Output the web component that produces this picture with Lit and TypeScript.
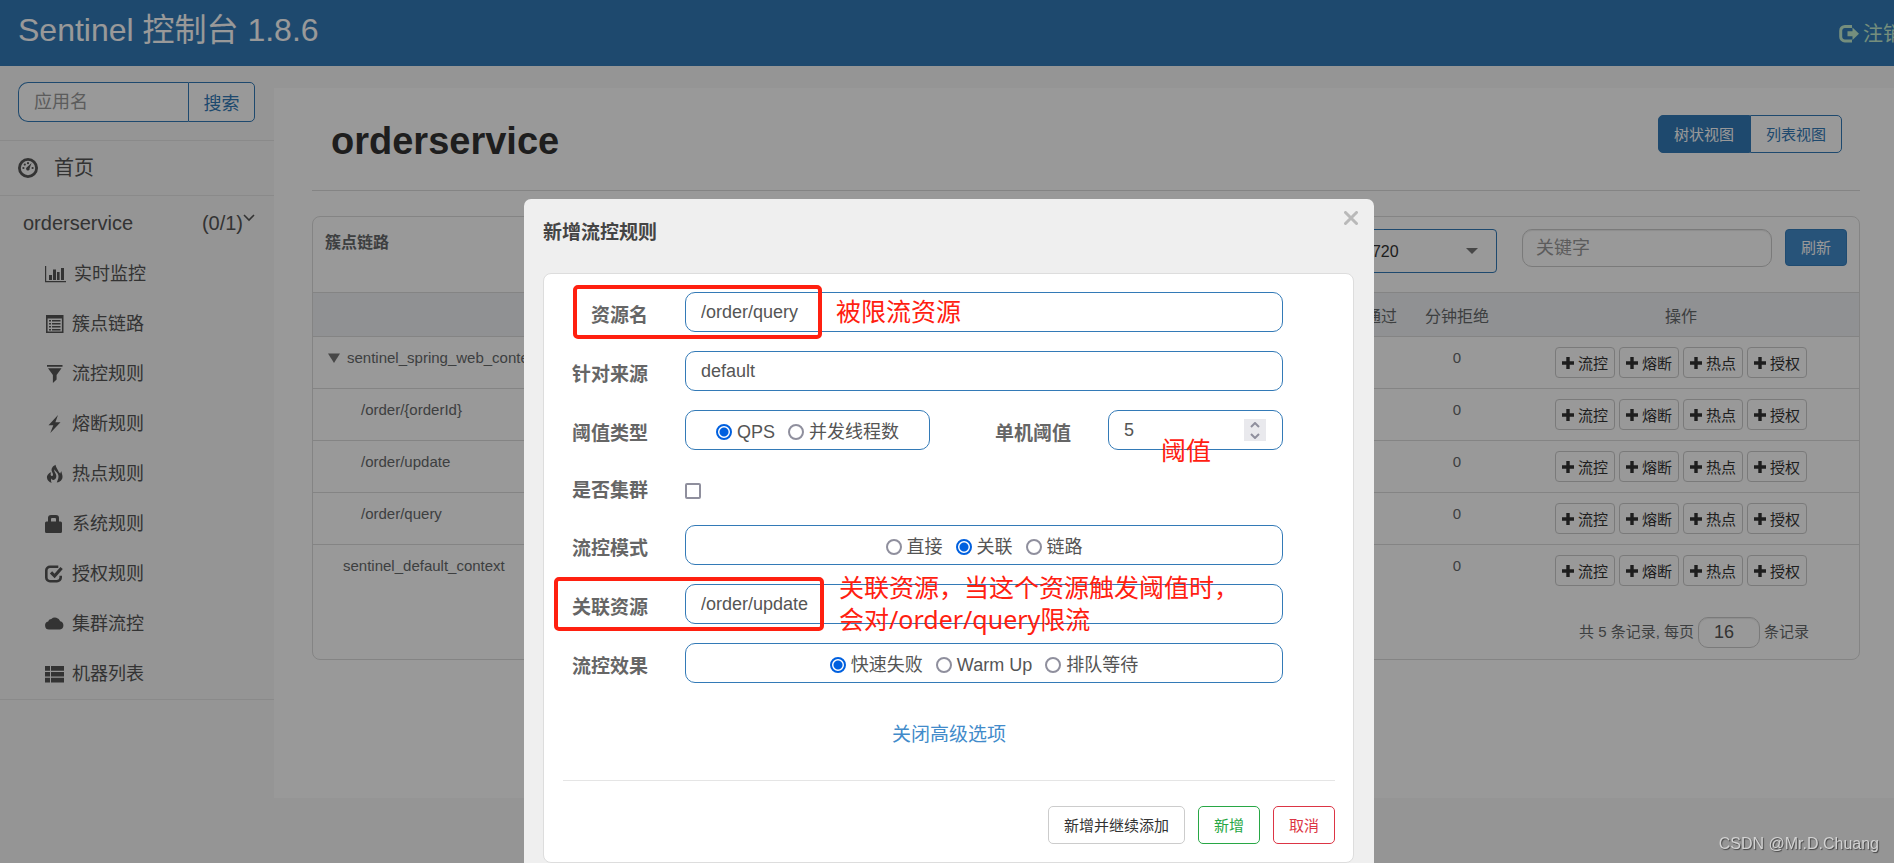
import { LitElement, html, css, svg, nothing } from "lit";
import { customElement, state } from "lit/decorators.js";

const icons = {
  dashboard: svg`<circle cx="10" cy="10" r="8.6" fill="none" stroke="currentColor" stroke-width="2.8"/>
    <circle cx="5.4" cy="10" r="1.1"/><circle cx="6.8" cy="6.6" r="1.1"/><circle cx="10" cy="5.2" r="1.1"/><circle cx="14.6" cy="10" r="1.1"/>
    <path d="M13.6 5 L11.6 10.2 A1.8 1.8 0 1 1 9.2 9 Z"/>`,
  chart: svg`<path d="M0 2h1.2v15H21v1.2H0z M4 11h3v5H4z M8 5.5h3v10.500H8z M12 8h2.600v8H12z M16 4h3v12h-3z"/>`,
  list: svg`<path fill-rule="evenodd" d="M1 1h17.500v18H1z M2.600 4.500v13h14.300v-13z"/>
    <path d="M4 6h2v1.600H4z M7 6h8.500v1.600H7z M4 9h2v1.600H4z M7 9h8.500v1.600H7z M4 12h2v1.600H4z M7 12h8.500v1.600H7z M4 15h2v1.400H4z M7 15h8.500v1.400H7z"/>`,
  filter: svg`<path d="M2 1h15.500v1.800H2z M3 4.200h13.500L11.600 11v4.500L7.900 19v-8z"/>`,
  flash: svg`<path d="M13 1 L3.500 11.200 H8.300 L5.300 19 L15.500 8.300 H10.400 Z"/>`,
  fire: svg`<path d="M10.500.8c-3 1.600-4.600 4-3.600 6.600.5 1.500 1.600 2.600.9 4-.6.900-1.900.6-2.100-.4-.2-1 .2-2 .6-2.700C3.600 9 1.700 11.500 2 14c.3 2.500 2.200 4.200 4.800 4.800-1-1.300-1-2.900-.2-4.300.3.900.9 1.500 1.700 1.500 2.600-.3 3.700-3.300 2.600-5.700C10.200 8.500 9 7.300 9.200 5.200c1 2.300 4.200 3.500 4.300 7 .1 2.700-1.400 4.700-1.700 6.400 3.300-.6 5.700-2.700 5.700-5.900 0-2.200-1-3.200-1-5.400-.7.600-1.100 1.400-1.200 2.300-1.300-.7-1.800-2-2.500-3.500-.9-1.700-1.900-3.100-2.300-5.300z"/>`,
  lock: svg`<path d="M0 9a1.500 1.500 0 0 1 1.500-1.500H3V4a3 3 0 0 1 3-3h5a3 3 0 0 1 3 3v3.500h1.500A1.500 1.500 0 0 1 17 9v8.500a1.500 1.500 0 0 1-1.500 1.500h-14A1.500 1.500 0 0 1 0 17.500z M6 7.500h5V5a1 1 0 0 0-1-1H7a1 1 0 0 0-1 1z" fill-rule="evenodd"/>`,
  check: svg`<path d="M13.300 2.800H5A3.700 3.700 0 0 0 1.300 6.500v7A3.700 3.700 0 0 0 5 17.200h7a3.700 3.700 0 0 0 3.700-3.700v-1.800" fill="none" stroke="currentColor" stroke-width="2.600"/>
    <path d="M6 8.300l3.600 3.700 7-8" fill="none" stroke="currentColor" stroke-width="3.200"/>`,
  cloud: svg`<path d="M4 15.500a4 4 0 0 1-.8-7.900A3 3 0 0 1 6.300 5 5.600 5.600 0 0 1 15.200 7.300 4.200 4.200 0 0 1 15 15.500z"/>`,
  thlist: svg`<path d="M0 2h5v4.800H0z M6 2h13v4.800H6z M0 8h5v4.600H0z M6 8h13v4.600H6z M0 13.800h5v4.800H0z M6 13.800h13v4.800H6z"/>`,
  logout: svg`<path d="M13 2.500H6A4.200 4.200 0 0 0 1.700 6.700v6A4.200 4.200 0 0 0 6 17h7" fill="none" stroke="currentColor" stroke-width="3"/>
    <path d="M8.500 7.300h5V3.500L20 9.800l-6.500 6.300v-3.800h-5z"/>`,
};

const menu: Array<[keyof typeof icons, string]> = [
  ["chart", "实时监控"],
  ["list", "簇点链路"],
  ["filter", "流控规则"],
  ["flash", "熔断规则"],
  ["fire", "热点规则"],
  ["lock", "系统规则"],
  ["check", "授权规则"],
  ["cloud", "集群流控"],
  ["thlist", "机器列表"],
];

const resources = [
  { name: "sentinel_spring_web_context", kind: "branch" },
  { name: "/order/{orderId}", kind: "leaf" },
  { name: "/order/update", kind: "leaf" },
  { name: "/order/query", kind: "leaf" },
  { name: "sentinel_default_context", kind: "root" },
];

@customElement("app-root")
export class AppRoot extends LitElement {
  @state() private grade = "QPS";
  @state() private mode = "关联";
  @state() private effect = "快速失败";

  static styles = css`
    :host {
      display: block;
      min-height: 100vh;
      overflow: hidden;
      background: #f8f8f8;
      color: #676a6c;
      font: 15px/22px "Liberation Sans", "Noto Sans CJK SC", sans-serif;
    }
    *, *::before, *::after { box-sizing: border-box; }
    button, input, select { font-family: inherit; margin: 0; }
    button { cursor: pointer; }
    a { color: inherit; text-decoration: none; }
    h1, h2, h3 { margin: 0; }
    svg { display: block; fill: currentColor; flex: none; }

    .topbar {
      display: flex;
      justify-content: space-between;
      height: 66px;
      padding-left: 18px;
      background: #337ab7;
      overflow: hidden;
    }
    .brand { font-size: 32px; line-height: 60px; color: #fff; white-space: nowrap; }
    .logout {
      display: flex;
      align-items: center;
      gap: 4px;
      width: 55px;
      padding-top: 2px;
      white-space: nowrap;
      font-size: 20px;
      color: #c4edd0;
    }

    .body { display: flex; align-items: flex-start; }
    .sidebar { width: 274px; flex: none; color: #555; }
    .search { display: flex; padding: 16px 19px 18px 18px; border-bottom: 1px solid #e7e7e7; }
    .search-box {
      flex: 1;
      min-width: 0;
      height: 40px;
      padding: 0 15px;
      border: 1px solid #337ab7;
      border-right: 0;
      border-radius: 10px 0 0 10px;
      background: #fff;
      font-size: 18px;
    }
    .search-btn {
      width: 67px;
      padding: 0;
      border: 1px solid #337ab7;
      border-radius: 0 5px 5px 0;
      background: #fff;
      color: #337ab7;
      font-size: 18px;
    }
    input::placeholder { color: #999; opacity: 1; }
    .home {
      display: flex;
      align-items: center;
      gap: 16px;
      height: 55px;
      padding-left: 18px;
      border-bottom: 1px solid #e7e7e7;
      font-size: 20px;
    }
    .app {
      display: flex;
      align-items: center;
      height: 53px;
      padding: 0 19px 0 23px;
      font-size: 20px;
    }
    .app-name { flex: 1; }
    .chevron { align-self: flex-start; margin-top: 18px; }
    .menu { margin: 0; padding: 0; list-style: none; border-bottom: 1px solid #e7e7e7; }
    .menu-link {
      display: flex;
      align-items: center;
      gap: 8px;
      height: 50px;
      padding-left: 45px;
      font-size: 18px;
    }

    .main {
      flex: 1;
      min-width: 0;
      margin-top: 22px;
      min-height: 710px;
      padding: 0 34px 0 38px;
      background: #fff;
    }
    .heading {
      display: flex;
      align-items: flex-start;
      justify-content: space-between;
      height: 103px;
      padding: 27px 18px 0 19px;
      border-bottom: 1px solid #ddd;
    }
    .title { font-size: 38px; line-height: 52px; color: #333; }
    .toggle { display: flex; }
    .toggle-btn {
      height: 38px;
      padding: 0 15px 2px;
      border: 1px solid #337ab7;
      background: #fff;
      color: #337ab7;
      font-size: 15px;
    }
    .toggle-btn:first-child { border-radius: 5px 0 0 5px; }
    .toggle-btn:last-child { border-radius: 0 5px 5px 0; }
    .toggle-btn.on { background: #337ab7; color: #fff; }

    .panel { margin-top: 25px; border: 1px solid #ddd; border-radius: 8px; }
    .toolbar { display: flex; align-items: flex-start; height: 75px; padding: 12px 12px 0; }
    .toolbar-title { flex: 1; font-size: 16px; line-height: 28px; }
    .machine {
      width: 150px;
      height: 44px;
      margin-right: 25px;
      padding: 0 16px 0 15px;
      border: 1px solid #337ab7;
      border-radius: 4px;
      appearance: none;
      color: #333;
      font-size: 16px;
      background: #fff url("data:image/svg+xml,%3Csvg xmlns='http://www.w3.org/2000/svg' width='12' height='6'%3E%3Cpath d='M0 0h12L6 6z' fill='%23777'/%3E%3C/svg%3E") no-repeat right 18px center;
    }
    .keyword {
      width: 250px;
      height: 38px;
      margin-right: 13px;
      padding: 0 13px;
      border: 1px solid #ccc;
      border-radius: 10px;
      box-shadow: inset 0 1px 1px rgba(0, 0, 0, 0.08);
      font-size: 18px;
    }
    .refresh {
      width: 62px;
      height: 37px;
      padding: 0 0 2px;
      border: 1px solid #357ebd;
      border-radius: 4px;
      background: #428bca;
      color: #fff;
      font-size: 15px;
    }
    .table { width: 100%; border-collapse: collapse; table-layout: fixed; }
    .col-count { width: 92px; }
    .col-actions { width: 356px; }
    .table th {
      height: 44px;
      padding: 4px 0 0;
      border-top: 1px solid #ddd;
      border-bottom: 1px solid #ddd;
      background: #f0f2f5;
      font-size: 16px;
      font-weight: 400;
    }
    .table td { height: 52px; padding: 10px 0; border-top: 1px solid #ddd; vertical-align: top; text-align: center; }
    .table td.name { text-align: left; white-space: nowrap; }
    .resource { display: flex; align-items: center; gap: 7px; }
    .branch { padding-left: 15px; }
    .leaf { padding-left: 48px; }
    .root { padding-left: 30px; }
    .actions { display: flex; justify-content: center; gap: 4px; }
    .action {
      display: flex;
      align-items: center;
      gap: 4px;
      height: 31px;
      padding: 0 6px;
      border: 1px solid #ccc;
      border-radius: 4px;
      background: #fff;
      color: #333;
      font-size: 15px;
    }
    .pager { display: flex; align-items: center; justify-content: flex-end; gap: 4px; padding: 20px 50px 11px 0; }
    .page-size {
      width: 62px;
      height: 31px;
      padding: 0 15px;
      border: 1px solid #ccc;
      border-radius: 10px;
      box-shadow: inset 0 1px 1px rgba(0, 0, 0, 0.08);
      color: #555;
      font-size: 18px;
    }

    .overlay {
      position: fixed;
      inset: 0;
      overflow: hidden;
      padding: 199px 0 0 4px;
      background: rgba(0, 0, 0, 0.4);
    }
    .dialog {
      position: relative;
      width: 850px;
      margin: 0 auto;
      padding: 0 20px 20px 19px;
      border-radius: 7px;
      background: #efefef;
    }
    .dialog-head { display: flex; justify-content: space-between; height: 74px; padding-top: 20px; }
    .dialog-title { font-size: 19px; line-height: 28px; color: #444; }
    .close {
      position: absolute;
      top: 8px;
      right: 12px;
      padding: 4px;
      border: 0;
      background: none;
      color: #b9b9b9;
    }
    .card { padding: 18px 18px 18px 19px; border: 1px solid #ddd; border-radius: 8px; background: #fff; }
    .form { display: grid; gap: 19px; padding-right: 52px; }
    .row { display: flex; align-items: center; gap: 37px; }
    .label { width: 85px; padding-top: 7px; text-align: right; font-size: 19px; font-weight: 700; color: #666; line-height: 30px; white-space: nowrap; }
    .field {
      flex: 1;
      min-width: 0;
      height: 40px;
      border: 1px solid #337ab7;
      border-radius: 10px;
      background: #fff;
      color: #555;
      font-size: 18px;
    }
    .text { padding: 0 15px; }
    .choices { display: flex; align-items: center; justify-content: center; gap: 13px; padding-top: 4px; }
    .choice { display: flex; align-items: center; gap: 5px; white-space: nowrap; }
    .radio, .tick { appearance: none; width: 16px; height: 16px; border: 2px solid #8f8f9d; background: #fff; }
    .radio { border-radius: 50%; }
    .radio:checked { border-color: #0060df; background: radial-gradient(circle, #0060df 4px, #fff 5px); }
    .tick { margin-top: 7px; border-radius: 2px; }
    .tick:checked { background: #0060df; }
    .short { flex: none; width: 175px; }
    .row .inline { flex: 1; width: auto; }
    .grade { flex: none; width: 245px; }
    .number { display: flex; align-items: center; padding: 0 16px 0 15px; }
    .number-input {
      flex: 1;
      min-width: 0;
      padding: 0;
      border: 0;
      outline: 0;
      appearance: textfield;
      color: inherit;
      font-size: 18px;
      background: none;
    }
    .number-input::-webkit-inner-spin-button { display: none; }
    .spinner { display: grid; width: 22px; height: 22px; background: #e9e9ed; color: #8f8f9d; }
    .spin { display: grid; place-items: center; padding: 0; border: 0; background: none; color: inherit; }
    .advanced { display: block; width: max-content; margin: 37px auto 30px; font-size: 19px; line-height: 30px; color: #428bca; }
    .foot { display: flex; justify-content: flex-end; gap: 13px; padding-top: 25px; border-top: 1px solid #e5e5e5; }
    .btn {
      height: 38px;
      padding: 0 15px 2px;
      border: 1px solid #ccc;
      border-radius: 5px;
      background: #fff;
      color: #333;
      font-size: 15px;
    }
    .btn.ok { border-color: #28a745; color: #28a745; }
    .btn.cancel { border-color: #dc3545; color: #dc3545; }

    .frame { position: absolute; height: 54px; border: 4px solid #ff2010; border-radius: 5px; pointer-events: none; }
    .note {
      position: absolute;
      color: #ff2010;
      font: 25px/32px "Noto Sans", "Noto Sans CJK SC", sans-serif;
      white-space: nowrap;
      pointer-events: none;
    }
    .frame-resource { top: 86px; left: 49px; width: 249px; }
    .frame-related { top: 378px; left: 30px; width: 270px; }
    .note-resource { top: 96px; left: 312px; }
    .note-threshold { top: 235px; left: 637px; }
    .note-related { top: 372px; left: 315px; }
    .watermark {
      position: fixed;
      right: 15px;
      bottom: 9px;
      font-size: 16px;
      line-height: 20px;
      color: #d2d2d2;
      text-shadow: 1px 1px 1px #444;
    }
  `;

  private icon(name: keyof typeof icons, width: number) {
    return html`<svg width=${width} height="20" viewBox="0 0 ${width} 20" overflow="visible" aria-hidden="true">${icons[name]}</svg>`;
  }

  private choices(group: string, options: string[], current: string, pick: (v: string) => void, extra = "") {
    return html`<div class="field choices ${extra}" role="radiogroup" aria-label=${group}>
      ${options.map(
        (o) => html`<label class="choice"
          ><input class="radio" type="radio" name=${group} .checked=${o === current} @change=${() => pick(o)} />${o}</label
        >`
      )}
    </div>`;
  }

  private resourceRow(r: { name: string; kind: string }) {
    return html`<tr>
      <td class="name">
        <div class="resource ${r.kind}">
          ${r.kind === "branch"
            ? html`<svg width="12" height="10" viewBox="0 0 12 10"><path d="M0 0.500h12L6 10z" fill="#777" /></svg>`
            : nothing}
          <span>${r.name}</span>
        </div>
      </td>
      <td>0</td>
      <td>0</td>
      <td>
        <div class="actions">
          ${["流控", "熔断", "热点", "授权"].map(
            (a) => html`<button class="action">
              <svg width="12" height="12" viewBox="0 0 12 12"><path d="M4.300 0h3.400v4.300H12v3.400H7.700V12H4.300V7.700H0V4.300h4.300z" /></svg>${a}
            </button>`
          )}
        </div>
      </td>
    </tr>`;
  }

  render() {
    return html`
      <header class="topbar">
        <a class="brand" href="#">Sentinel 控制台 1.8.6</a>
        <a class="logout" href="#">${this.icon("logout", 20)}<span>注销</span></a>
      </header>
      <div class="body">
        <nav class="sidebar">
          <div class="search">
            <input class="search-box" type="text" placeholder="应用名" aria-label="应用名" />
            <button class="search-btn">搜索</button>
          </div>
          <a class="home" href="#">${this.icon("dashboard", 20)}<span>首页</span></a>
          <a class="app" href="#">
            <span class="app-name">orderservice</span><span>(0/1)</span>
            <svg class="chevron" width="12" height="8" viewBox="0 0 12 8">
              <path d="M1 1l5 5 5-5" fill="none" stroke="currentColor" stroke-width="1.600" />
            </svg>
          </a>
          <ul class="menu">
            ${menu.map(
              ([name, text]) => html`<li>
                <a class="menu-link" href="#">${this.icon(name, name === "chart" ? 21 : 19)}<span>${text}</span></a>
              </li>`
            )}
          </ul>
        </nav>
        <main class="main">
          <div class="heading">
            <h1 class="title">orderservice</h1>
            <div class="toggle">
              <button class="toggle-btn on">树状视图</button><button class="toggle-btn">列表视图</button>
            </div>
          </div>
          <section class="panel">
            <div class="toolbar">
              <h2 class="toolbar-title">簇点链路</h2>
              <select class="machine" aria-label="机器"><option>8720</option></select>
              <input class="keyword" type="text" placeholder="关键字" aria-label="关键字" />
              <button class="refresh">刷新</button>
            </div>
            <table class="table">
              <colgroup>
                <col />
                <col class="col-count" />
                <col class="col-count" />
                <col class="col-actions" />
              </colgroup>
              <thead>
                <tr><th>资源名</th><th>分钟通过</th><th>分钟拒绝</th><th>操作</th></tr>
              </thead>
              <tbody>${resources.map((r) => this.resourceRow(r))}</tbody>
            </table>
            <div class="pager">
              <label for="page-size">共 5 条记录, 每页</label>
              <input class="page-size" id="page-size" type="text" value="16" />
              <span>条记录</span>
            </div>
          </section>
        </main>
      </div>

      <div class="overlay">
        <div class="dialog" role="dialog" aria-labelledby="dialog-title">
          <div class="dialog-head">
            <h3 class="dialog-title" id="dialog-title">新增流控规则</h3>
            <button class="close" aria-label="关闭">
              <svg width="14" height="14" viewBox="0 0 14 14">
                <path d="M1.500 1.500l11 11M12.500 1.500l-11 11" stroke="currentColor" stroke-width="3" stroke-linecap="round" />
              </svg>
            </button>
          </div>
          <div class="card">
            <form class="form" @submit=${(e: Event) => e.preventDefault()}>
              <div class="row">
                <label class="label" for="resource">资源名</label>
                <input class="field text" id="resource" type="text" value="/order/query" />
              </div>
              <div class="row">
                <label class="label" for="origin">针对来源</label>
                <input class="field text" id="origin" type="text" value="default" />
              </div>
              <div class="row">
                <span class="label">阈值类型</span>
                ${this.choices("阈值类型", ["QPS", "并发线程数"], this.grade, (v) => (this.grade = v), "grade")}
                <label class="label inline" for="count">单机阈值</label>
                <div class="field number short">
                  <input class="number-input" id="count" type="number" value="5" />
                  <div class="spinner">
                    <button class="spin" type="button" aria-label="+1">
                      <svg width="10" height="6" viewBox="0 0 10 6"><path d="M1 5l4-4 4 4" fill="none" stroke="currentColor" stroke-width="2" /></svg>
                    </button>
                    <button class="spin" type="button" aria-label="-1">
                      <svg width="10" height="6" viewBox="0 0 10 6"><path d="M1 1l4 4 4-4" fill="none" stroke="currentColor" stroke-width="2" /></svg>
                    </button>
                  </div>
                </div>
              </div>
              <div class="row">
                <label class="label" for="cluster">是否集群</label>
                <input class="tick" id="cluster" type="checkbox" />
              </div>
              <div class="row">
                <span class="label">流控模式</span>
                ${this.choices("流控模式", ["直接", "关联", "链路"], this.mode, (v) => (this.mode = v))}
              </div>
              <div class="row">
                <label class="label" for="related">关联资源</label>
                <input class="field text" id="related" type="text" value="/order/update" />
              </div>
              <div class="row">
                <span class="label">流控效果</span>
                ${this.choices("流控效果", ["快速失败", "Warm Up", "排队等待"], this.effect, (v) => (this.effect = v))}
              </div>
            </form>
            <a class="advanced" href="#">关闭高级选项</a>
            <div class="foot">
              <button class="btn">新增并继续添加</button>
              <button class="btn ok">新增</button>
              <button class="btn cancel">取消</button>
            </div>
          </div>
          <div class="frame frame-resource"></div>
          <div class="frame frame-related"></div>
          <div class="note note-resource">被限流资源</div>
          <div class="note note-threshold">阈值</div>
          <div class="note note-related">关联资源，当这个资源触发阈值时，<br />会对/order/query限流</div>
        </div>
      </div>
      <div class="watermark">CSDN @Mr.D.Chuang</div>
    `;
  }
}
